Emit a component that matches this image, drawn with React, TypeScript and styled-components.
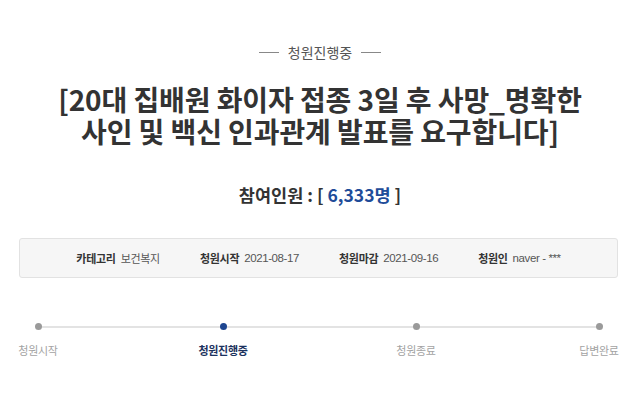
import React from "react";
import styled, { createGlobalStyle } from "styled-components";

const Global = createGlobalStyle`
  html, body { margin: 0; padding: 0; background: #fff; }
  body { font-family: "Noto Sans CJK KR", "Noto Sans", sans-serif; color: #333; }
  * { box-sizing: border-box; }
`;

const Page = styled.div`
  width: 640px;
  height: 407px;
  padding-top: 42px;
  overflow: hidden;
`;

const Status = styled.div`
  display: flex;
  align-items: center;
  justify-content: center;
  gap: 9px;
  height: 20px;
  font-size: 14px;
  line-height: 20px;
  color: #555;
  &::before, &::after {
    content: "";
    width: 20px;
    height: 1px;
    background: #888;
  }
`;

const Headline = styled.h1`
  margin: 21px 0 0;
  text-align: center;
  font-size: 28px;
  line-height: 32px;
  font-weight: 700;
  color: #333;
  letter-spacing: -0.1px;
`;

const HeadLine = styled.span`
  display: block;
  white-space: nowrap;
`;

const Count = styled.div`
  margin-top: 36px;
  text-align: center;
  font-size: 17.5px;
  line-height: 24px;
  font-weight: 700;
  color: #333;
`;

const CountNum = styled.span`
  color: #1f4c99;
`;

const InfoBox = styled.div`
  margin: 31px 22px 0 19px;
  height: 40px;
  background: #f6f6f6;
  border: 1px solid #e2e2e2;
  border-radius: 3px;
  display: flex;
  align-items: center;
  justify-content: center;
  gap: 40px;
`;

const InfoItem = styled.div`
  display: flex;
  align-items: center;
  gap: 5px;
  font-size: 11px;
  line-height: 14px;
  letter-spacing: -0.3px;
`;

const InfoLabel = styled.span`
  font-weight: 700;
  color: #333;
`;

const InfoValue = styled.span`
  color: #555;
  font-family: "Liberation Sans", "Noto Sans CJK KR", sans-serif;
  font-size: 11.5px;
  letter-spacing: -0.4px;
`;

const InfoValueKr = styled.span`
  color: #555;
`;

const Progress = styled.div`
  position: relative;
  margin-top: 45px;
  display: grid;
  grid-template-columns: 185px 193px 183px 76px;
  &::before {
    content: "";
    position: absolute;
    left: 38px;
    width: 561px;
    top: 3px;
    height: 2px;
    background: #e3e3e3;
  }
`;

const Step = styled.div`
  position: relative;
  width: 76px;
  display: flex;
  flex-direction: column;
  align-items: center;
  gap: 12px;
`;

const Dot = styled.span<{ $active?: boolean }>`
  width: 7px;
  height: 7px;
  border-radius: 50%;
  background: ${(p) => (p.$active ? "#1d4590" : "#9a9a9a")};
`;

const StepLabel = styled.span<{ $active?: boolean }>`
  font-size: 11px;
  line-height: 16px;
  letter-spacing: -0.3px;
  font-weight: ${(p) => (p.$active ? 700 : 400)};
  color: ${(p) => (p.$active ? "#1c325e" : "#a3a3a3")};
  white-space: nowrap;
`;

const steps = [
  { label: "청원시작" },
  { label: "청원진행중", active: true },
  { label: "청원종료" },
  { label: "답변완료" },
];

export default function App() {
  return (
    <>
      <Global />
      <Page>
        <Status>청원진행중</Status>
        <Headline>
          <HeadLine>[20대 집배원 화이자 접종 3일 후 사망_명확한</HeadLine>
          <HeadLine>사인 및 백신 인과관계 발표를 요구합니다]</HeadLine>
        </Headline>
        <Count>
          참여인원 : [ <CountNum>6,333명</CountNum> ]
        </Count>
        <InfoBox>
          <InfoItem>
            <InfoLabel>카테고리</InfoLabel>
            <InfoValueKr>보건복지</InfoValueKr>
          </InfoItem>
          <InfoItem>
            <InfoLabel>청원시작</InfoLabel>
            <InfoValue>2021-08-17</InfoValue>
          </InfoItem>
          <InfoItem>
            <InfoLabel>청원마감</InfoLabel>
            <InfoValue>2021-09-16</InfoValue>
          </InfoItem>
          <InfoItem>
            <InfoLabel>청원인</InfoLabel>
            <InfoValue>naver - ***</InfoValue>
          </InfoItem>
        </InfoBox>
        <Progress>
          {steps.map((s) => (
            <Step key={s.label}>
              <Dot $active={s.active} />
              <StepLabel $active={s.active}>{s.label}</StepLabel>
            </Step>
          ))}
        </Progress>
      </Page>
    </>
  );
}
